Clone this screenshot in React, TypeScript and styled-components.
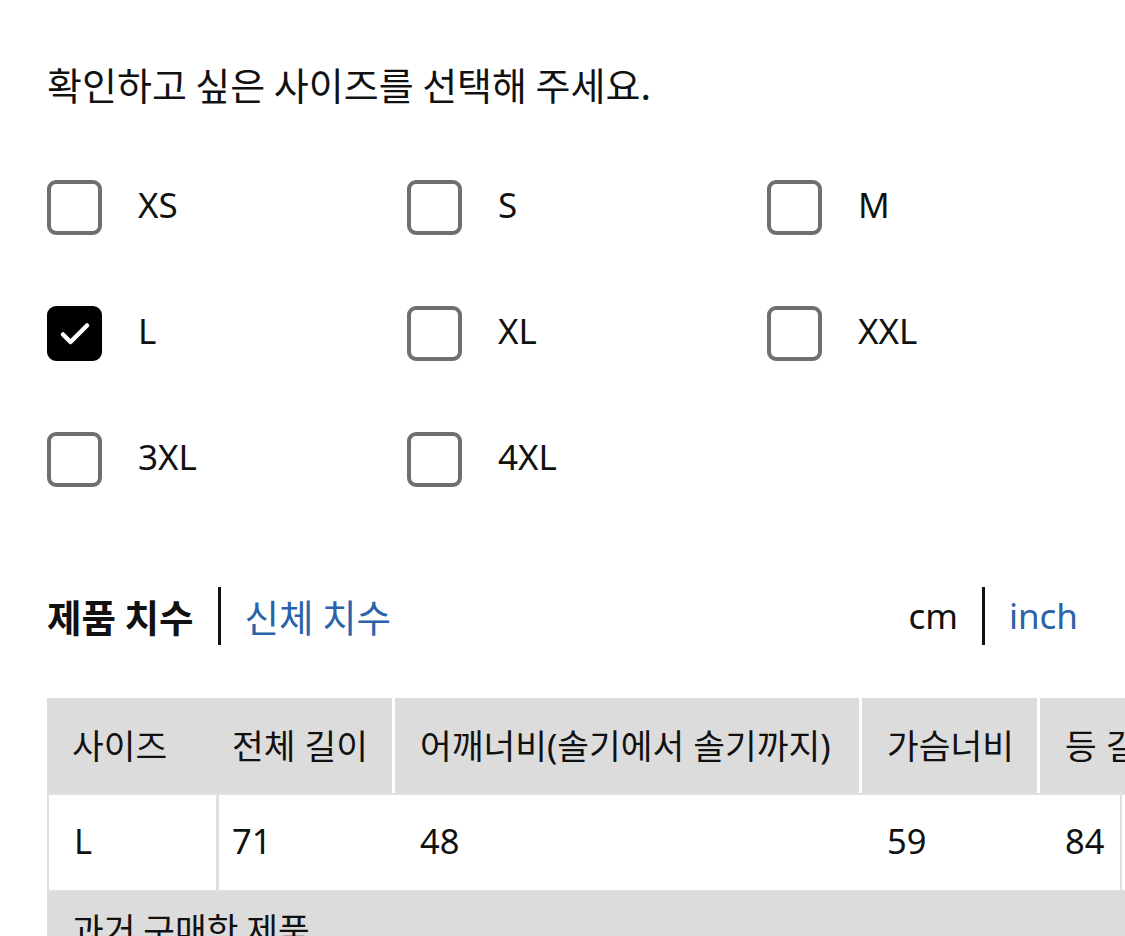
import React, { useState } from 'react';
import styled, { createGlobalStyle } from 'styled-components';

const GlobalStyle = createGlobalStyle`
  html, body {
    margin: 0;
    padding: 0;
    background: #ffffff;
    overflow: hidden;
  }
  body {
    font-family: "Noto Sans", "Noto Sans CJK KR", sans-serif;
    color: #111111;
  }
`;

const Page = styled.div`
  width: 1125px;
  height: 936px;
  overflow: hidden;
  padding: 59px 0 0 47px;
  box-sizing: border-box;
`;

const Title = styled.h1`
  margin: 0;
  font-family: "Noto Sans CJK KR", sans-serif;
  font-size: 38px;
  font-weight: 400;
  line-height: 50px;
`;

const SizeGrid = styled.div`
  display: grid;
  grid-template-columns: repeat(3, 360px);
  grid-auto-rows: 126px;
  margin-top: 71px;
`;

const Option = styled.label`
  display: flex;
  align-items: flex-start;
  gap: 36px;
  cursor: pointer;
`;

const Box = styled.span<{ $checked: boolean }>`
  width: 55px;
  height: 55px;
  box-sizing: border-box;
  border-radius: 9px;
  border: 4px solid ${({ $checked }) => ($checked ? '#000000' : '#6f6f6f')};
  background: ${({ $checked }) => ($checked ? '#000000' : '#ffffff')};
  display: flex;
  align-items: center;
  justify-content: center;
`;

const OptionLabel = styled.span`
  font-size: 35px;
  line-height: 50px;
  color: #111111;
`;

const TabBar = styled.div`
  display: flex;
  align-items: center;
  justify-content: space-between;
  margin-top: 28px;
  padding-right: 47px;
`;

const TabGroup = styled.div`
  display: flex;
  align-items: center;
`;

const Tab = styled.span<{ $active: boolean }>`
  font-family: "Noto Sans CJK KR", sans-serif;
  font-size: 37.5px;
  font-weight: ${({ $active }) => ($active ? 700 : 400)};
  color: ${({ $active }) => ($active ? '#111111' : '#2a63a8')};
  line-height: 60px;
  cursor: pointer;
`;

const Unit = styled.span<{ $active: boolean }>`
  font-family: "Noto Sans", sans-serif;
  font-size: 35px;
  color: ${({ $active }) => ($active ? '#111111' : '#2a63a8')};
  line-height: 60px;
  cursor: pointer;
`;

const Divider = styled.span`
  width: 3px;
  height: 58px;
  background: #111111;
  margin: 0 24px;
`;

const TableWrap = styled.div`
  margin-top: 52px;
  width: 1078px;
  overflow: hidden;
`;

const Row = styled.div<{ $cols: string; $head?: boolean }>`
  display: grid;
  grid-template-columns: ${({ $cols }) => $cols};
  width: 1160px;
  background: ${({ $head }) => ($head ? '#dcdcdc' : '#ffffff')};
  border-bottom: 2px solid #e0e0e0;
`;

const Cell = styled.div<{ $sep?: 'white' | 'gray'; $pad?: number }>`
  height: 95px;
  box-sizing: border-box;
  display: flex;
  align-items: center;
  padding: 0 0 4px ${({ $pad }) => $pad ?? 25}px;
  font-family: "Noto Sans", "Noto Sans CJK KR", sans-serif;
  font-size: 34.5px;
  white-space: nowrap;
  color: #111111;
  border-right: 3px solid
    ${({ $sep }) => ($sep === 'white' ? '#ffffff' : $sep === 'gray' ? '#e0e0e0' : 'transparent')};
`;

const BodyRow = styled(Row)`
  border-left: 2px solid #e0e0e0;
  box-sizing: border-box;
`;

const EndCell = styled(Cell)`
  border-right: 2px solid #e0e0e0;
`;

const History = styled.div`
  background: #dcdcdc;
  height: 100px;
  padding: 14px 25px;
  box-sizing: border-box;
  font-family: "Noto Sans CJK KR", sans-serif;
  font-size: 34.5px;
  line-height: 44px;
  color: #111111;
`;

const Check = () => (
  <svg width="32" height="26" viewBox="0 0 32 26" fill="none">
    <path d="M4 13.5l7.5 7.5L28 4.5" stroke="#ffffff" strokeWidth="4.5" strokeLinecap="round" strokeLinejoin="round" />
  </svg>
);

const sizes = ['XS', 'S', 'M', 'L', 'XL', 'XXL', '3XL', '4XL'];

const App = () => {
  const [selected, setSelected] = useState<string[]>(['L']);
  const [unit, setUnit] = useState('cm');
  const [tab, setTab] = useState('product');

  const toggle = (s: string) => {
    setSelected(selected.includes(s) ? selected.filter((x) => x !== s) : [...selected, s]);
  };

  return (
    <>
      <GlobalStyle />
      <Page>
        <Title>확인하고 싶은 사이즈를 선택해 주세요.</Title>
        <SizeGrid>
          {sizes.map((s) => {
            const on = selected.includes(s);
            return (
              <Option key={s} onClick={() => toggle(s)}>
                <Box $checked={on}>{on && <Check />}</Box>
                <OptionLabel>{s}</OptionLabel>
              </Option>
            );
          })}
        </SizeGrid>
        <TabBar>
          <TabGroup>
            <Tab $active={tab === 'product'} onClick={() => setTab('product')}>제품 치수</Tab>
            <Divider />
            <Tab $active={tab === 'body'} onClick={() => setTab('body')}>신체 치수</Tab>
          </TabGroup>
          <TabGroup>
            <Unit $active={unit === 'cm'} onClick={() => setUnit('cm')}>cm</Unit>
            <Divider />
            <Unit $active={unit === 'inch'} onClick={() => setUnit('inch')}>inch</Unit>
          </TabGroup>
        </TabBar>
        <TableWrap>
          <Row $head $cols="160px 188px 467px 178px 1fr">
            <Cell>사이즈</Cell>
            <Cell $sep="white">전체 길이</Cell>
            <Cell $sep="white">어깨너비(솔기에서 솔기까지)</Cell>
            <Cell $sep="white">가슴너비</Cell>
            <Cell>등 길이</Cell>
          </Row>
          <BodyRow $cols="170px 176px 467px 178px 82px 1fr">
            <Cell $sep="gray">L</Cell>
            <Cell $pad={13}>71</Cell>
            <Cell>48</Cell>
            <Cell>59</Cell>
            <EndCell>84</EndCell>
          </BodyRow>
          <History>과거 구매한 제품</History>
        </TableWrap>
      </Page>
    </>
  );
};

export default App;
